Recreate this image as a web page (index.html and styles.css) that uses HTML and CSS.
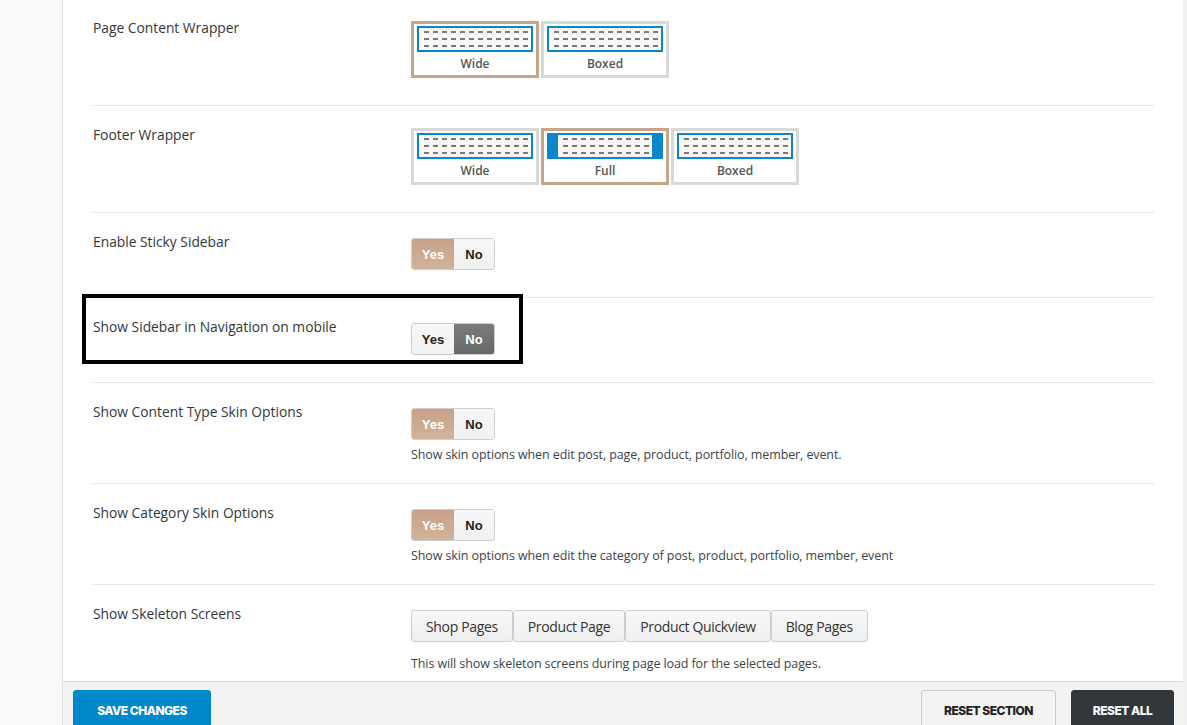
FILE: index.html
```html
<!DOCTYPE html>
<html>
<head>
<meta charset="utf-8">
<title>Theme Options</title>
<link rel="stylesheet" href="styles.css">
</head>
<body>
<div class="page">
  <aside class="side"></aside>
  <main class="main">
    <div class="panel">
      <div class="rows">
        <div class="row">
          <div class="label">Page Content Wrapper</div>
          <div class="field">
            <div class="pickers">
              <div class="pick active">
                <div class="wire"><svg class="dots" viewBox="0 0 112 22"><line x1="5" y1="4" x2="112" y2="4"/><line x1="5" y1="11" x2="112" y2="11"/><line x1="5" y1="18" x2="112" y2="18"/></svg></div>
                <div class="pname">Wide</div>
              </div>
              <div class="pick">
                <div class="wire"><svg class="dots" viewBox="0 0 112 22"><line x1="5" y1="4" x2="112" y2="4"/><line x1="5" y1="11" x2="112" y2="11"/><line x1="5" y1="18" x2="112" y2="18"/></svg></div>
                <div class="pname">Boxed</div>
              </div>
            </div>
          </div>
        </div>

        <div class="row">
          <div class="label">Footer Wrapper</div>
          <div class="field">
            <div class="pickers">
              <div class="pick">
                <div class="wire"><svg class="dots" viewBox="0 0 112 22"><line x1="5" y1="4" x2="112" y2="4"/><line x1="5" y1="11" x2="112" y2="11"/><line x1="5" y1="18" x2="112" y2="18"/></svg></div>
                <div class="pname">Wide</div>
              </div>
              <div class="pick active">
                <div class="wire full"><svg class="dots" viewBox="0 0 94 22"><line x1="5" y1="4" x2="94" y2="4"/><line x1="5" y1="11" x2="94" y2="11"/><line x1="5" y1="18" x2="94" y2="18"/></svg></div>
                <div class="pname">Full</div>
              </div>
              <div class="pick">
                <div class="wire"><svg class="dots" viewBox="0 0 112 22"><line x1="5" y1="4" x2="112" y2="4"/><line x1="5" y1="11" x2="112" y2="11"/><line x1="5" y1="18" x2="112" y2="18"/></svg></div>
                <div class="pname">Boxed</div>
              </div>
            </div>
          </div>
        </div>

        <div class="row">
          <div class="label">Enable Sticky Sidebar</div>
          <div class="field">
            <div class="switch">
              <span class="opt yes on">Yes</span><span class="opt no">No</span>
            </div>
          </div>
        </div>

        <div class="row highlighted">
          <div class="label">Show Sidebar in Navigation on mobile</div>
          <div class="field">
            <div class="switch">
              <span class="opt yes">Yes</span><span class="opt no off">No</span>
            </div>
          </div>
          <div class="mark"></div>
        </div>

        <div class="row">
          <div class="label">Show Content Type Skin Options</div>
          <div class="field">
            <div class="switch">
              <span class="opt yes on">Yes</span><span class="opt no">No</span>
            </div>
            <p class="desc">Show skin options when edit post, page, product, portfolio, member, event.</p>
          </div>
        </div>

        <div class="row">
          <div class="label">Show Category Skin Options</div>
          <div class="field">
            <div class="switch">
              <span class="opt yes on">Yes</span><span class="opt no">No</span>
            </div>
            <p class="desc">Show skin options when edit the category of post, product, portfolio, member, event</p>
          </div>
        </div>

        <div class="row last">
          <div class="label">Show Skeleton Screens</div>
          <div class="field">
            <div class="multi">
              <span class="mbtn">Shop Pages</span><span class="mbtn">Product Page</span><span class="mbtn">Product Quickview</span><span class="mbtn">Blog Pages</span>
            </div>
            <p class="desc">This will show skeleton screens during page load for the selected pages.</p>
          </div>
        </div>
      </div>
    </div>
    <div class="bar">
      <button class="btn save">Save Changes</button>
      <div class="bar-right">
        <button class="btn reset-sec">Reset Section</button>
        <button class="btn reset-all">Reset All</button>
      </div>
    </div>
  </main>
  <div class="scroll"></div>
</div>
</body>
</html>
```

FILE: styles.css
```css
* { box-sizing: border-box; }
html, body { margin: 0; padding: 0; }
body {
  width: 1187px;
  height: 725px;
  overflow: hidden;
  font-family: "Open Sans", "Noto Sans", sans-serif;
  color: #32373c;
  background: #fff;
}
.page {
  display: flex;
  height: 725px;
}
.side {
  width: 63px;
  flex: none;
  background: #f9f9f9;
  border-right: 1px solid #e2e2e2;
}
.scroll {
  width: 4px;
  flex: none;
  background: #f1f1f1;
}
.main {
  flex: 1;
  display: flex;
  flex-direction: column;
  background: #fff;
  min-width: 0;
}
.panel {
  flex: 1;
  overflow: hidden;
  padding: 0 29px 0 30px;
}
.rows {
  margin-top: -1px;
}
.row {
  position: relative;
  display: flex;
  padding: 22px 0 27px;
  border-bottom: 1px solid #e5e5e5;
}
.row.last { border-bottom: 0; }
.label {
  width: 318px;
  flex: none;
  font-size: 13.8px;
  line-height: 14px;
  color: #32373c;
}
.field { flex: 1; }

/* image pickers */
.pickers {
  display: flex;
  gap: 2px;
}
.pick {
  width: 128px;
  height: 57px;
  border: 3px solid #d9d9d9;
  background: #fff;
}
.pick.active { border-color: #c6a589; }
.wire {
  margin: 2px 3px 0;
  height: 26px;
  border: 2px solid #0a86c9;
  background: #faf7f7;
}
.wire.full {
  background: #0a86c9;
  padding: 0 9px;
}
.dots {
  display: block;
  width: 100%;
  height: 22px;
  background: #faf7f7;
  shape-rendering: crispEdges;
}
.dots line {
  stroke: #7a7a7a;
  stroke-width: 2;
  stroke-dasharray: 5 4;
}
.pname {
  text-align: center;
  font-size: 12px;
  line-height: 22px;
  padding-top: 1px;
  font-weight: 600;
  color: #555;
}

/* yes/no switch */
.switch {
  display: inline-flex;
  margin-top: 3px;
  height: 32px;
  border: 1px solid #cfcfcf;
  border-radius: 3px;
  overflow: hidden;
  font-family: "Liberation Sans", Arial, sans-serif;
  font-weight: bold;
  font-size: 13px;
}
.opt {
  display: flex;
  align-items: center;
  justify-content: center;
  background: linear-gradient(#f7f7f7, #f1f1f1);
  color: #222;
}
.opt.yes { width: 42px; }
.opt.no { width: 40px; }
.opt.on {
  background: linear-gradient(#c7a186, #d2b39b);
  color: #fff;
}
.opt.off {
  background: linear-gradient(#7c7c7c, #686868);
  color: #fff;
}
.desc {
  margin: 6px 0 -8px;
  font-size: 12.5px;
  line-height: 18px;
  letter-spacing: -0.1px;
  color: #3c434a;
}

/* multi buttons */
.multi {
  display: flex;
  margin: 3px 0 13px;
}
.mbtn {
  height: 32px;
  display: flex;
  align-items: center;
  padding: 0 14px;
  border: 1px solid #cdcdcd;
  border-radius: 3px;
  background: linear-gradient(#f8f8f8, #efefef);
  font-size: 14px;
  letter-spacing: -0.35px;
  color: #333;
}

/* highlight annotation */
.mark {
  position: absolute;
  left: -11px;
  top: -4px;
  width: 441px;
  height: 70px;
  border: 4px solid #000;
  pointer-events: none;
}

/* bottom bar */
.bar {
  height: 44px;
  flex: none;
  background: #f3f3f3;
  border-top: 1px solid #dcdcdc;
  display: flex;
  justify-content: space-between;
  align-items: flex-start;
  padding: 8px 9px 0 10px;
}
.bar-right {
  display: flex;
  gap: 15px;
}
.btn {
  height: 40px;
  padding: 0;
  white-space: nowrap;
  border-radius: 3px;
  border: 1px solid transparent;
  font-family: "Inter", sans-serif;
  font-weight: 800;
  font-size: 12px;
  letter-spacing: -0.5px;
  text-transform: uppercase;
  cursor: pointer;
}
.btn.save {
  width: 138px;
  background: #0088cc;
  border-color: #0088cc;
  color: #fff;
}
.btn.reset-sec {
  width: 135px;
  background: #f3f3f3;
  border-color: #cacaca;
  color: #222;
}
.btn.reset-all {
  width: 103px;
  background: #32373c;
  border-color: #32373c;
  color: #fff;
}
```
